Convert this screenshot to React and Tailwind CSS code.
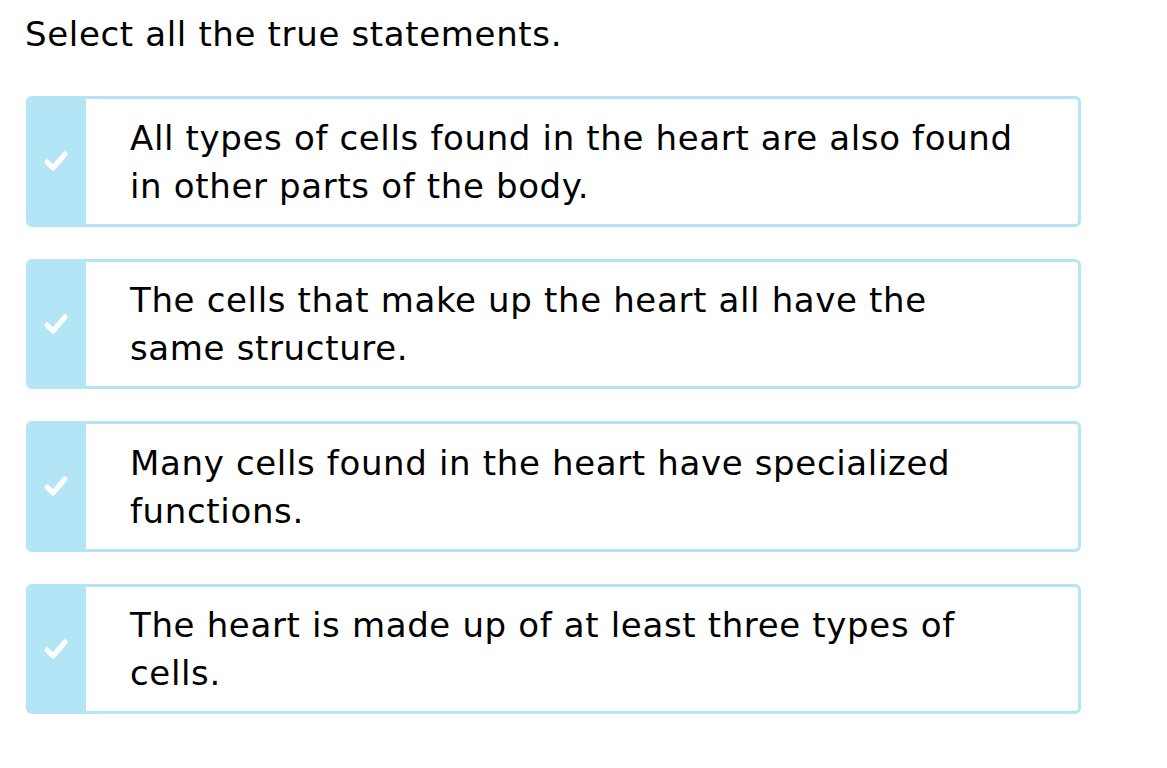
import React from 'react';

const items = [
  'All types of cells found in the heart are also found in other parts of the body.',
  'The cells that make up the heart all have the same structure.',
  'Many cells found in the heart have specialized functions.',
  'The heart is made up of at least three types of cells.',
];

function Check() {
  return (
    <svg width="26" height="24" viewBox="0 0 26 24" fill="none">
      <polyline points="4,13 10,19 22,5" stroke="white" strokeWidth="5" strokeLinecap="round" strokeLinejoin="round" />
    </svg>
  );
}

export default function App() {
  return (
    <div className="min-h-screen bg-white pl-[25px] pt-[10px] text-black tracking-[0.65px]" style={{ fontFamily: '"DejaVu Sans", Verdana, sans-serif' }}>
      <h1 className="text-[34px] leading-[48px] font-normal">Select all the true statements.</h1>
      <div className="mt-[38px] flex flex-col gap-[32px] w-[1055px] ml-[1px]">
        {items.map((t) => (
          <div key={t} className="flex h-[130.5px] rounded-[6px] border-[3px] border-[#b3e5f7] bg-white overflow-hidden">
            <div className="w-[57px] bg-[#b3e5f7] flex items-center justify-center pr-[3px]">
              <Check />
            </div>
            <div className="flex-1 flex items-center pl-[44px] pt-[1px]">
              <p className="max-w-[892px] text-[34px] leading-[48px]">{t}</p>
            </div>
          </div>
        ))}
      </div>
    </div>
  );
}
